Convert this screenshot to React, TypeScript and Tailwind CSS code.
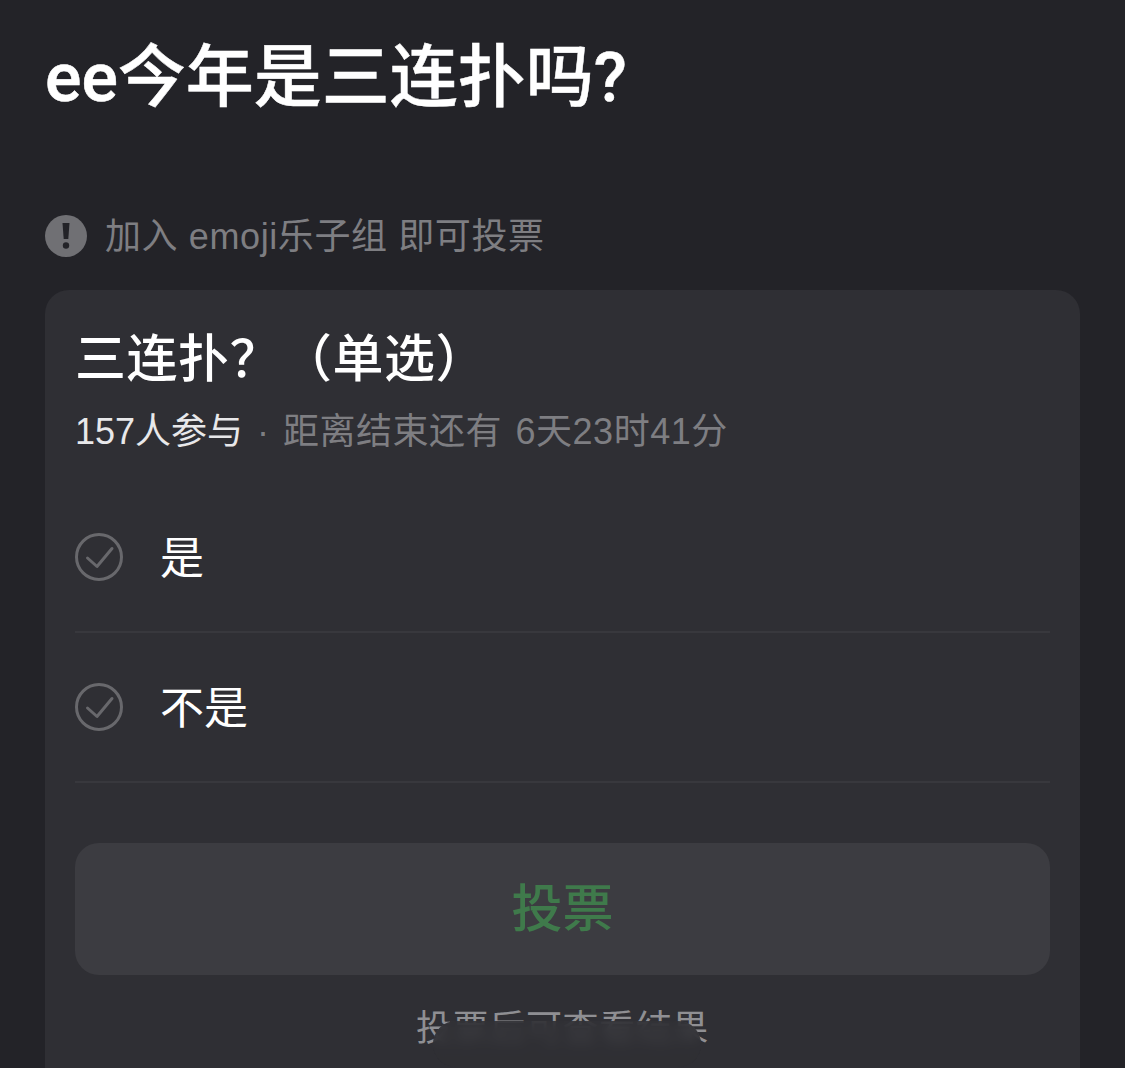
const font = { fontFamily: '"Liberation Sans", "Noto Sans CJK SC", sans-serif' }
const titleFont = { fontFamily: 'Roboto, "Noto Sans CJK SC", sans-serif' }

function CheckCircle() {
  return (
    <svg viewBox="0 0 48 48" className="w-12 h-12 shrink-0" fill="none" stroke="#68686c" strokeWidth="3">
      <circle cx="24" cy="24" r="22.5" />
      <path d="M12.5 25 L22 33.5 L37 15.5" strokeLinecap="round" strokeLinejoin="round" />
    </svg>
  )
}

function Option({ label }: { label: string }) {
  return (
    <div className="h-[150px] flex items-center gap-[37px] border-b-2 border-[#38383d]">
      <CheckCircle />
      <span className="pt-[3px] text-[44px] leading-none text-white">{label}</span>
    </div>
  )
}

export default function App() {
  return (
    <div style={font} className="h-[1068px] w-[1125px] overflow-hidden bg-[#232328] px-[45px]">
      <h1 style={titleFont} className="pt-[39px] h-[152px] text-[68px] leading-[78px] font-medium text-white [-webkit-text-stroke:0.5px_white]">ee今年是三连扑吗?</h1>

      <div className="mt-[60px] h-[48px] flex items-center gap-[18px] text-[36px] tracking-[0.6px] text-[#7e7e82]">
        <svg viewBox="0 0 42 42" className="w-[42px] h-[42px] shrink-0">
          <circle cx="21" cy="21" r="21" fill="#707074" />
          <path d="M17.5 8h7l-1.2 16h-4.6z" fill="#232328" />
          <circle cx="21" cy="30.5" r="3.2" fill="#232328" />
        </svg>
        <span className="pt-[2px] whitespace-nowrap">加入 emoji乐子组 即可投票</span>
      </div>

      <div className="mt-[30px] w-[1035px] rounded-[24px] bg-[#2f2f34] px-[30px] pt-[40px] pb-[60px]">
        <h2 style={titleFont} className="text-[51px] leading-[60px] tracking-[0.5px] font-medium text-white whitespace-nowrap">三连扑？（单选）</h2>
        <p className="mt-[20px] flex text-[36px] leading-[44px] text-[#7e7e82] whitespace-nowrap">
          <span className="text-[#e8e8ea]">157人参与</span>
          <span className="mx-[14px]">·</span>
          <span className="tracking-[0.5px] [word-spacing:3px]">距离结束还有 6天23时41分</span>
        </p>
        <div className="mt-[29px]">
          <Option label="是" />
          <Option label="不是" />
        </div>
        <button className="mt-[60px] pt-[2px] h-[132px] w-full rounded-[24px] bg-[#3c3c41] text-[51px] font-medium text-[#3f7a4b]">
          投票
        </button>
        <div className="relative mt-[32px] text-center text-[36px] leading-[44px] tracking-[0.6px] text-[#8f8f93]">
          投票后可查看结果
          <div className="absolute left-[358px] top-[14px] h-[46px] w-[268px] rounded-full bg-[#2f2f34]/85 backdrop-blur-[6px]" />
        </div>
      </div>
    </div>
  )
}
